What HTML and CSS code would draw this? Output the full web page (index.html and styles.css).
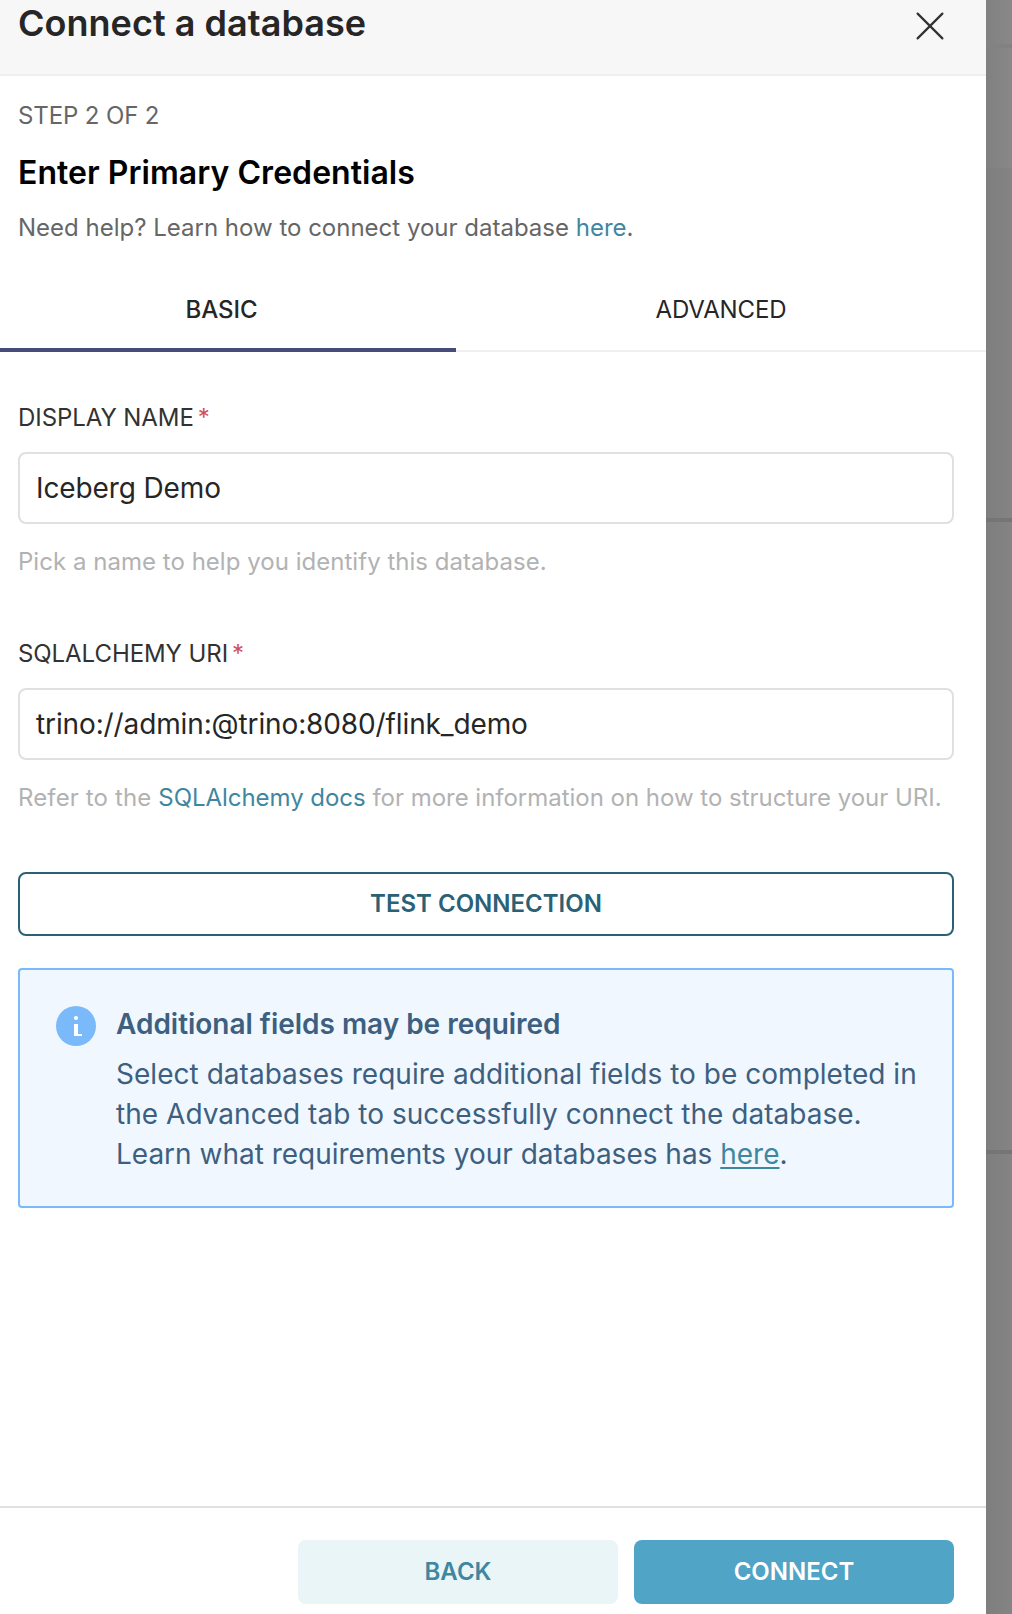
FILE: index.html
```html
<!DOCTYPE html>
<html lang="en">
<head>
<meta charset="utf-8">
<title>Connect a database</title>
<link rel="stylesheet" href="styles.css">
</head>
<body>
<div class="screen">
  <main class="modal">
    <header class="modal-header">
      <h1 class="modal-title">Connect a database</h1>
      <svg class="close" viewBox="0 0 32 32" role="img" aria-label="Close"><path d="M3.6 3.6 28.4 28.4M28.4 3.6 3.6 28.4"/></svg>
    </header>
    <section class="intro">
      <p class="step">STEP 2 OF 2</p>
      <h2 class="heading">Enter Primary Credentials</h2>
      <p class="help">Need help? Learn how to connect your database <a class="link">here</a>.</p>
    </section>
    <nav class="tabs">
      <div class="tab tab-active">BASIC</div>
      <div class="tab">ADVANCED</div>
    </nav>
    <form class="form">
      <label class="label">DISPLAY NAME<span class="required">*</span></label>
      <div class="input">Iceberg Demo</div>
      <p class="hint">Pick a name to help you identify this database.</p>
      <label class="label">SQLALCHEMY URI<span class="required">*</span></label>
      <div class="input">trino://admin:@trino:8080/flink_demo</div>
      <p class="hint hint-uri"><span class="hint-lead">Refer to the </span><a class="link">SQLAlchemy docs</a> for more information on how to structure your URI.</p>
      <div class="button button-outline">TEST CONNECTION</div>
      <aside class="alert">
        <svg class="info" viewBox="0 0 40 40" aria-hidden="true"><circle class="info-disc" cx="20" cy="20" r="20"/><circle cx="20" cy="12" r="2.1"/><path d="M18 18h4v10h4v2h-8z"/></svg>
        <div class="alert-body">
          <h3 class="alert-title">Additional fields may be required</h3>
          <p class="alert-text">Select databases require additional fields to be completed in<br>the Advanced tab to successfully connect the database.<br><span class="alert-more">Learn what requirements your databases has <a class="link link-underlined">here</a>.</span></p>
        </div>
      </aside>
    </form>
    <footer class="footer">
      <div class="button button-back">BACK</div>
      <div class="button button-connect">CONNECT</div>
    </footer>
  </main>
  <div class="backdrop">
    <div class="strip-nav"></div>
    <div class="strip-menu"></div>
    <div class="strip-list"></div>
    <div class="strip-rows"></div>
  </div>
</div>
</body>
</html>
```
FILE: styles.css
```css
* { box-sizing: border-box; }

body {
  margin: 0;
  font-family: Inter, "Liberation Sans", sans-serif;
  color: #262626;
}

h1, h2, h3, p { margin: 0; }

.screen {
  display: flex;
  width: 1012px;
  height: 1614px;
  overflow: hidden;
}

.modal {
  display: flex;
  flex-direction: column;
  width: 986px;
  background: #fff;
}

.modal-header {
  display: flex;
  justify-content: space-between;
  height: 76px;
  padding: 0 40px 0 18px;
  background: #f7f7f7;
  border-bottom: 2px solid #efefef;
}

.modal-title {
  font-size: 36px;
  font-weight: 600;
  line-height: 46px;
  letter-spacing: 0.03px;
}

.close {
  width: 32px;
  height: 32px;
  margin-top: 10px;
  fill: none;
  stroke: #323232;
  stroke-width: 2.2;
  stroke-linecap: round;
}

.intro { padding: 22px 18px 0; }

.step, .help {
  color: #666;
  font-size: 24px;
  line-height: 36px;
}

.step { letter-spacing: -0.12px; }

.heading {
  margin: 15px 0 13px;
  color: #000;
  font-size: 32px;
  font-weight: 600;
  line-height: 48px;
  letter-spacing: 0.04px;
}

.link { color: #3f87a0; }

.link-underlined {
  text-decoration: underline;
  text-decoration-thickness: 2px;
  text-underline-offset: 3px;
  text-decoration-skip-ink: none;
}

.tabs {
  display: flex;
  height: 104px;
  margin-top: 2px;
  border-bottom: 2px solid #f0f0f0;
}

.tab {
  display: flex;
  flex: 1;
  justify-content: center;
  height: 104px;
  padding-top: 44px;
  font-size: 24px;
  line-height: 36px;
  letter-spacing: -0.1px;
}

.tab-active {
  flex: 0 0 456px;
  padding-right: 13px;
  border-bottom: 4px solid #484c7a;
  font-weight: 500;
}

.form { padding: 46px 32px 0 18px; }

.label {
  display: flex;
  gap: 4px;
  height: 54px;
  color: #323232;
  font-size: 24px;
  line-height: 40px;
  letter-spacing: -0.07px;
}

.required { color: #d2505c; }

.input {
  height: 72px;
  padding: 0 16px;
  border: 2px solid #e0e0e0;
  border-radius: 8px;
  font-size: 28px;
  line-height: 68px;
  letter-spacing: -0.12px;
}

.hint {
  height: 110px;
  padding-top: 20px;
  color: #b2b2b2;
  font-size: 24px;
  line-height: 36px;
  letter-spacing: 0.03px;
}

.hint-uri {
  height: 112px;
  letter-spacing: -0.02px;
}

.hint-lead { letter-spacing: 0.13px; }
.hint-uri .link { letter-spacing: -0.04px; }

.button {
  display: flex;
  justify-content: center;
  height: 64px;
  border-radius: 8px;
  font-size: 24px;
  font-weight: 600;
  line-height: 64px;
}

.button-outline {
  border: 2px solid #2a6175;
  color: #2a6175;
  line-height: 60px;
}

.alert {
  display: flex;
  gap: 20px;
  height: 240px;
  margin-top: 32px;
  padding: 36px;
  background: #f0f7fe;
  border: 2px solid #7bbafa;
  border-radius: 4px;
  color: #3d5f80;
}

.info {
  flex: none;
  width: 40px;
  height: 40px;
  fill: #fff;
}

.info-disc { fill: #7bbafa; }

.alert-title {
  font-size: 28px;
  font-weight: 600;
  line-height: 36px;
  letter-spacing: -0.02px;
}

.alert-text {
  margin-top: 12px;
  font-size: 28px;
  line-height: 40px;
  letter-spacing: 0.03px;
  white-space: nowrap;
}

.alert-more { letter-spacing: -0.01px; }

.footer {
  display: flex;
  justify-content: flex-end;
  gap: 16px;
  height: 108px;
  margin-top: auto;
  padding: 32px 32px 0 0;
  border-top: 2px solid #e0e0e0;
}

.button-back, .button-connect { width: 320px; }
.button-back { background: #eaf5f8; color: #3f87a0; }
.button-connect { background: #50a4c5; color: #fff; }

.backdrop {
  flex: 1;
  background: linear-gradient(90deg, #7e7e7e, #848484);
}

.strip-nav { height: 48px; background: linear-gradient(90deg, #818181, #888); border-bottom: 4px solid #828282; }
.strip-menu { height: 120px; background: linear-gradient(90deg, #808080, #888); }
.strip-list { height: 354px; border-bottom: 4px solid #757575; }
.strip-rows { height: 632px; border-bottom: 4px solid #757575; }
```
